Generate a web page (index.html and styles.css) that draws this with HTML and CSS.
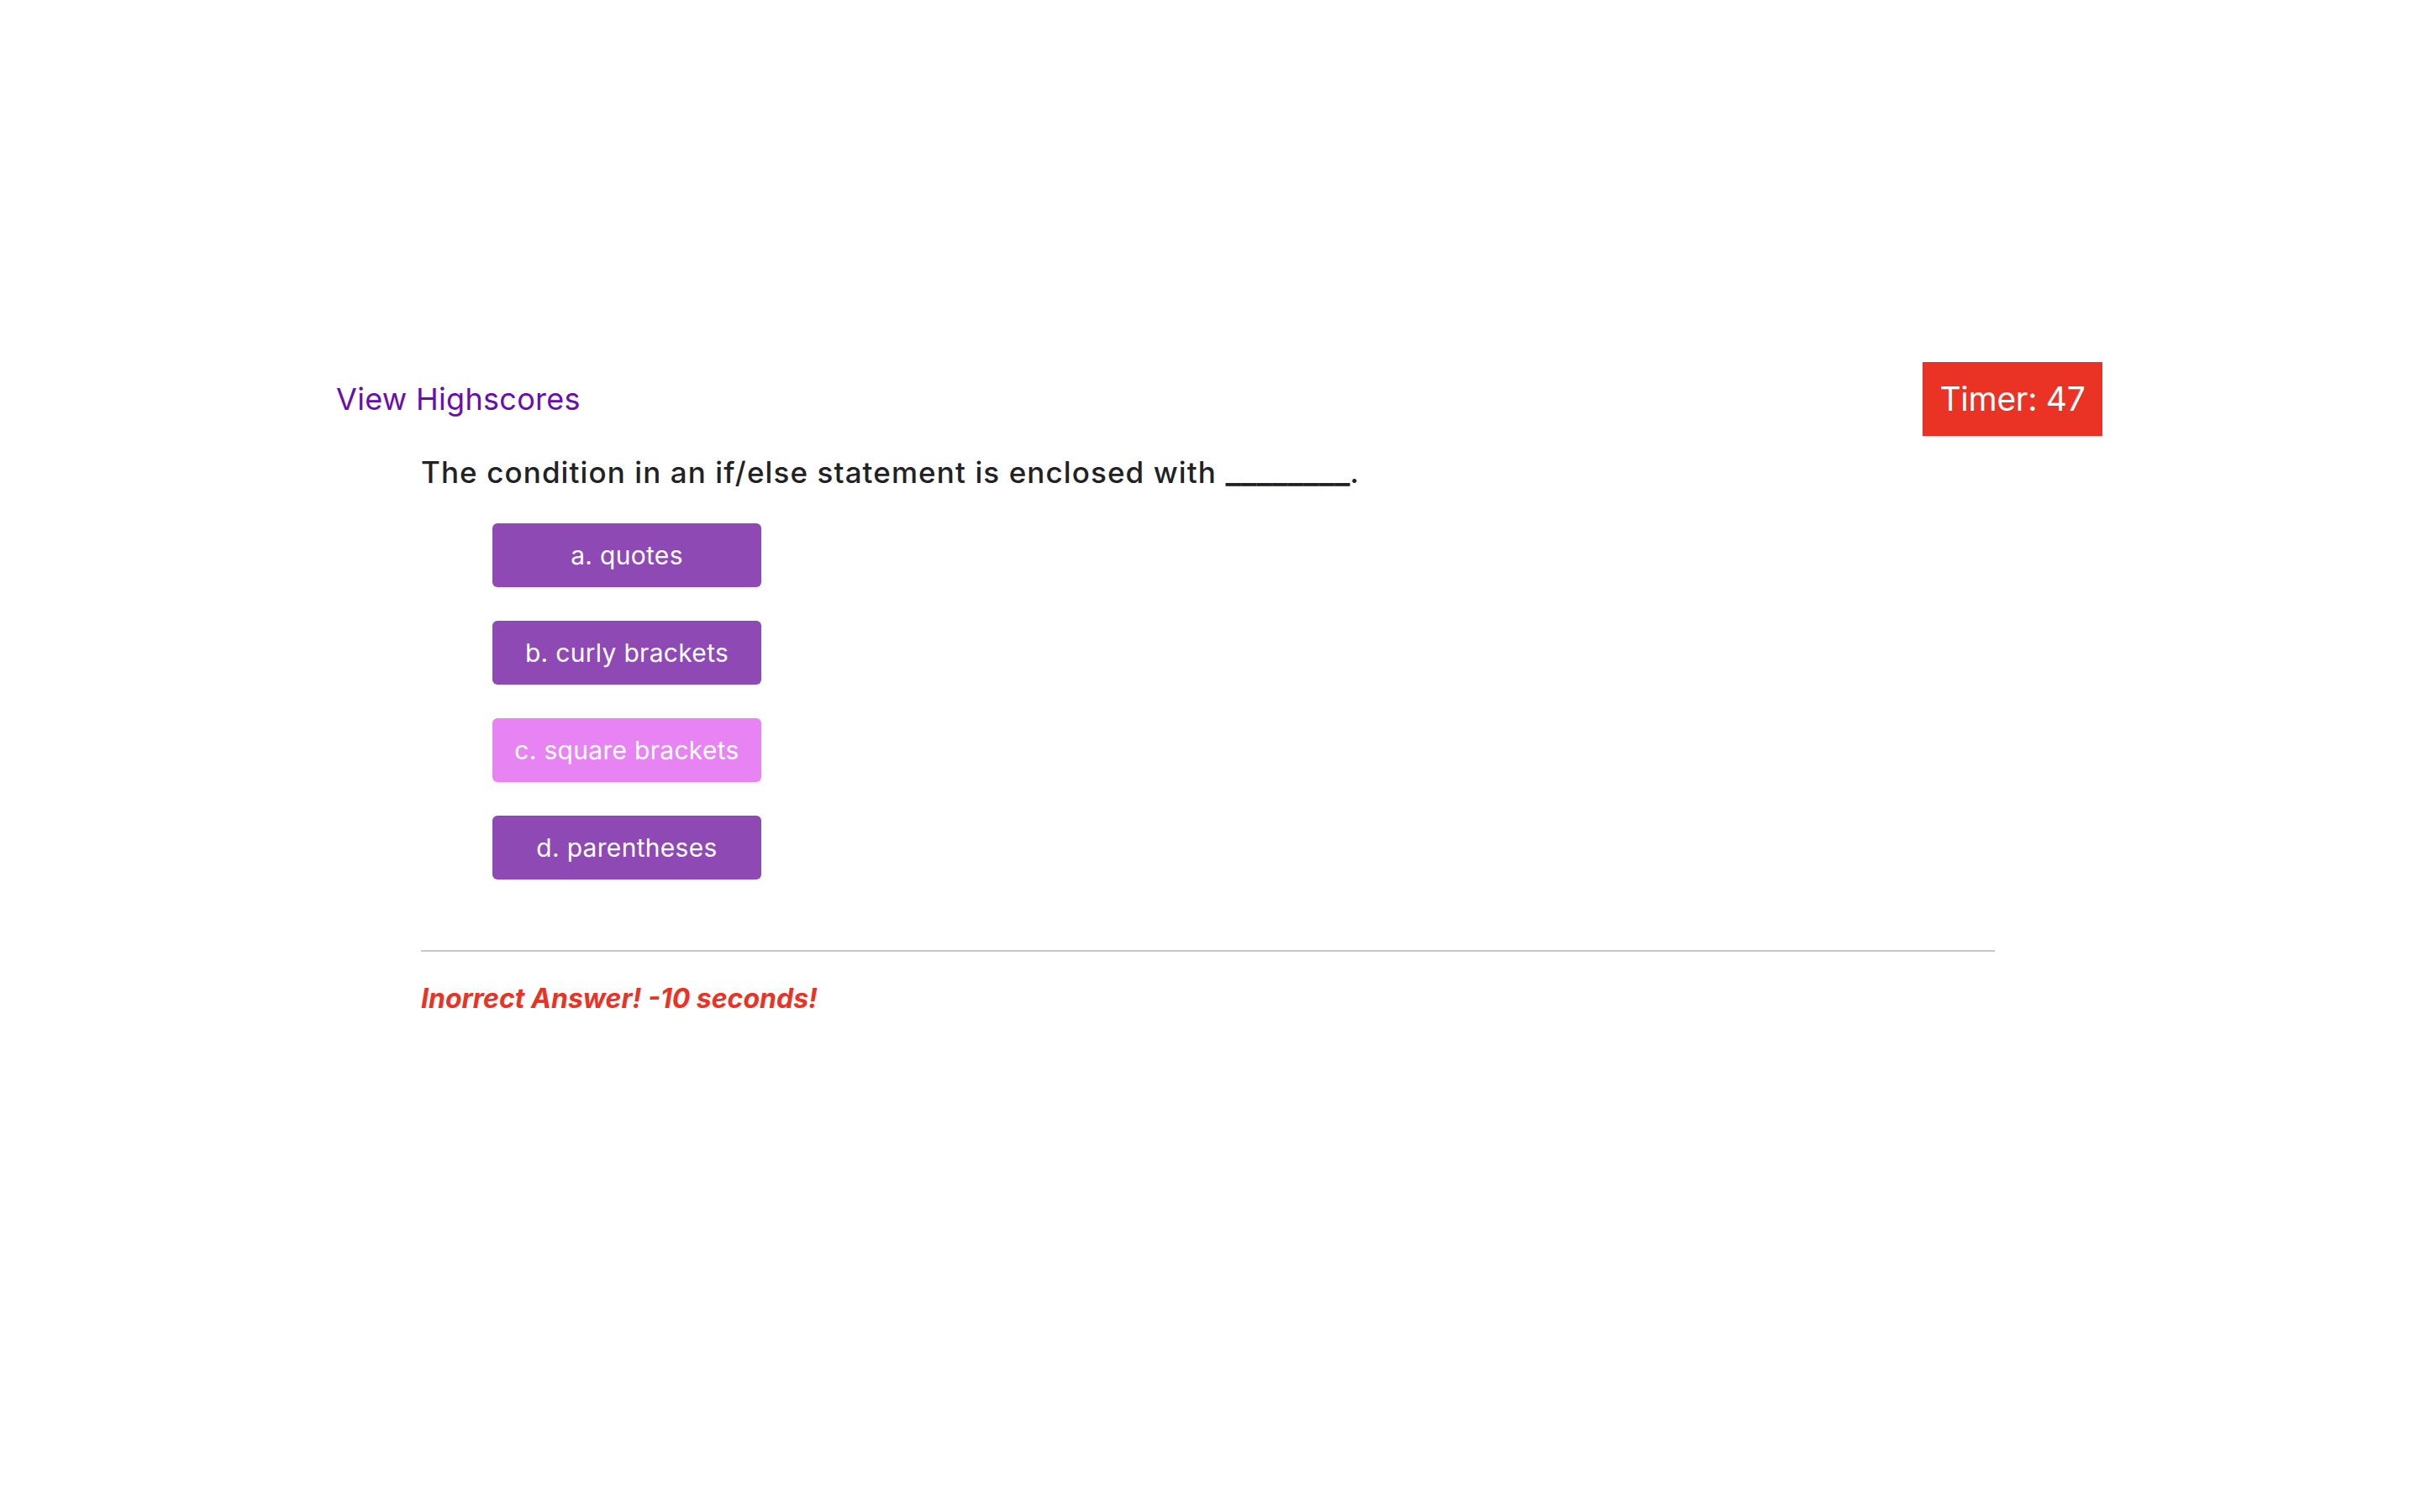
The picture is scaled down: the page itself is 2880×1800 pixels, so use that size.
FILE: index.html
```html
<!DOCTYPE html>
<html lang="en">
<head>
<meta charset="utf-8">
<title>Code Quiz</title>
<link rel="stylesheet" href="styles.css">
</head>
<body>
<div class="page">
  <header class="topbar">
    <a class="highscores" href="#">View Highscores</a>
    <div class="timer">Timer: 47</div>
  </header>
  <main class="quiz">
    <h2 class="question">The condition in an if/else statement is enclosed with <span class="blank">________</span>.</h2>
    <div class="choices">
      <button class="choice">a. quotes</button>
      <button class="choice">b. curly brackets</button>
      <button class="choice choice-hover">c. square brackets</button>
      <button class="choice">d. parentheses</button>
    </div>
    <hr class="divider">
    <p class="feedback">Inorrect Answer! -10 seconds!</p>
  </main>
</div>
</body>
</html>
```

FILE: styles.css
```css
html, body {
  margin: 0;
  padding: 0;
  background: #ffffff;
}

body {
  font-family: Inter, "Noto Sans", "DejaVu Sans", sans-serif;
  color: #222226;
}

.page {
  padding: 431px 378px 0 400px;
}

.topbar {
  display: flex;
  justify-content: space-between;
  align-items: center;
}

.highscores {
  font-size: 36px;
  line-height: 44px;
  letter-spacing: 0.3px;
  color: #6a0dad;
  text-decoration: none;
}

.timer {
  background: #ea3324;
  color: #ffffff;
  font-size: 39px;
  line-height: 88px;
  height: 88px;
  width: 214px;
  padding: 0;
  white-space: nowrap;
  text-align: center;
  letter-spacing: -0.3px;
}

.quiz {
  padding-left: 101px;
  width: 1873px;
}

.question {
  margin: 23px 0 0 0;
  height: 40px;
  font-size: 35px;
  line-height: 40px;
  font-weight: 500;
  letter-spacing: 1.1px;
  color: #222226;
}

.blank {
  font-size: 40px;
  line-height: 0;
  letter-spacing: 0;
}

.choices {
  margin-top: 41px;
  padding-left: 85px;
  display: flex;
  flex-direction: column;
  align-items: flex-start;
  gap: 40px;
}

.choice {
  width: 320px;
  height: 76px;
  border: none;
  border-radius: 6px;
  background: #8e49b5;
  color: #ffffff;
  font-family: Inter, "Noto Sans", "DejaVu Sans", sans-serif;
  font-size: 30px;
  letter-spacing: 0.3px;
  padding: 0;
  cursor: pointer;
}

.choice-hover {
  background: #e783f3;
}

.divider {
  margin: 84px 0 0 0;
  border: none;
  height: 2px;
  background: #c8c8c8;
}

.feedback {
  margin: 36px 0 0 0;
  font-size: 32px;
  line-height: 40px;
  font-weight: 700;
  font-style: italic;
  color: #ea3324;
}
```
